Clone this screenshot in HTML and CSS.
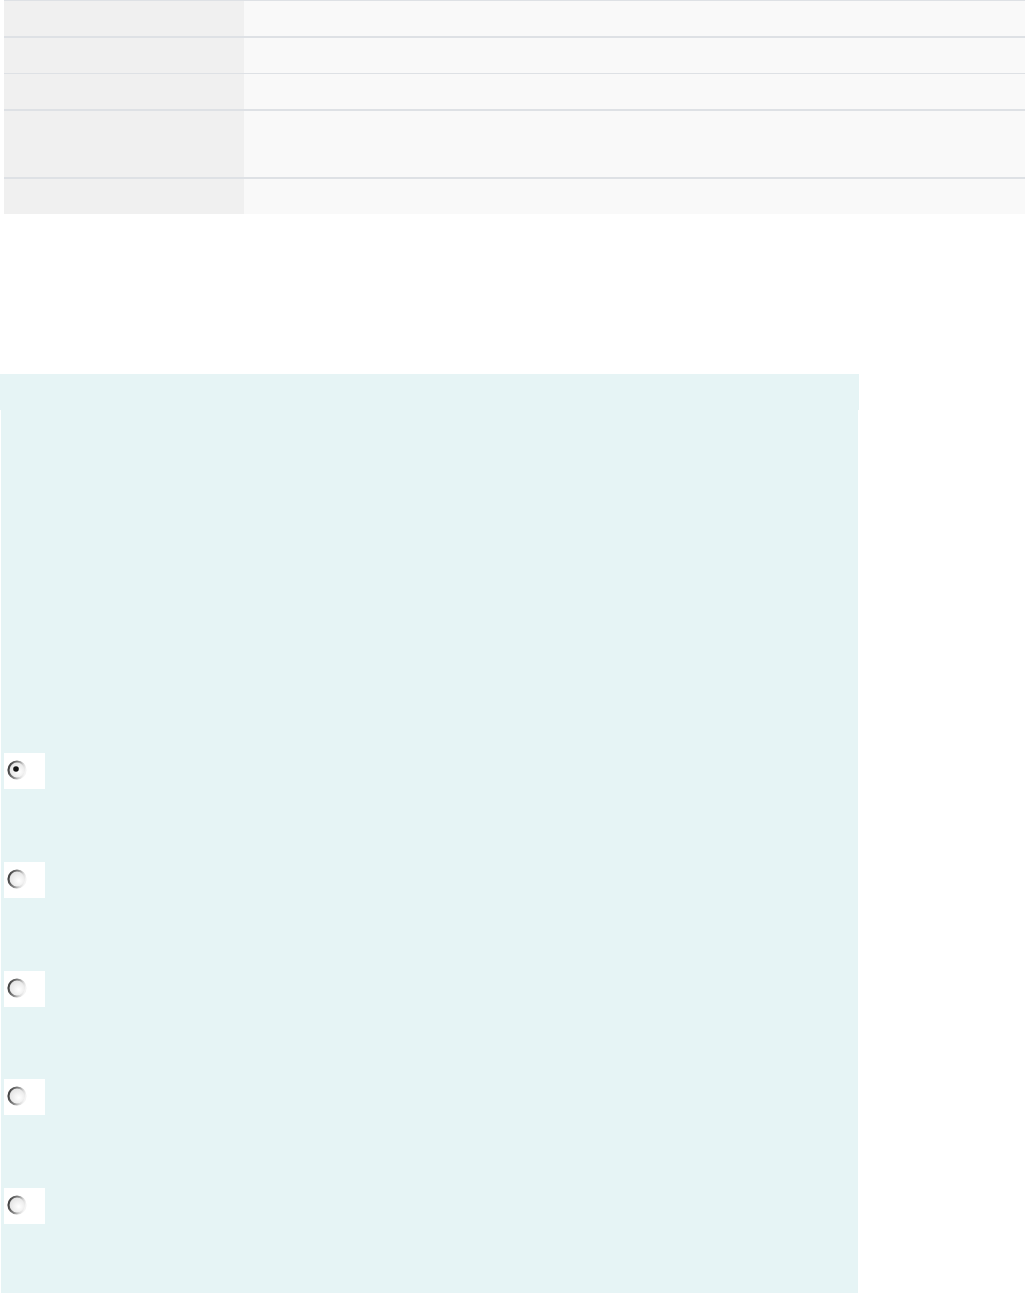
FILE: index.html
```html
<!DOCTYPE html>
<html lang="en">
<head>
<meta charset="utf-8">
<title>Form</title>
<link rel="stylesheet" href="styles.css">
</head>
<body>
<div class="details">
  <div class="row first"><div class="label"></div><div class="value"></div></div>
  <div class="row r2"><div class="label"></div><div class="value"></div></div>
  <div class="row r3"><div class="label"></div><div class="value"></div></div>
  <div class="row tall"><div class="label"></div><div class="value"></div></div>
  <div class="row r5"><div class="label"></div><div class="value"></div></div>
</div>

<section class="card">
  <div class="card-head"></div>
  <div class="card-body">
    <label class="choice"><svg class="radio" width="22" height="22" viewBox="0 0 22 22"><defs><linearGradient id="rg" x1="0" y1="0.2" x2="1" y2="0.5"><stop offset="0" stop-color="#3a3a3a"/><stop offset="0.5" stop-color="#8a8a8a"/><stop offset="0.8" stop-color="#d8d8d8"/><stop offset="1" stop-color="#f4f4f4"/></linearGradient><radialGradient id="fg" cx="0.6" cy="0.6" r="0.6"><stop offset="0" stop-color="#ffffff"/><stop offset="1" stop-color="#e2e2e2"/></radialGradient></defs><circle cx="11" cy="11" r="8.5" fill="url(#fg)" stroke="url(#rg)" stroke-width="2.2"/><circle cx="10" cy="10" r="2.8" fill="#111"/></svg></label>
    <label class="choice"><svg class="radio" width="22" height="22" viewBox="0 0 22 22"><circle cx="11" cy="11" r="8.5" fill="url(#fg)" stroke="url(#rg)" stroke-width="2.2"/></svg></label>
    <label class="choice"><svg class="radio" width="22" height="22" viewBox="0 0 22 22"><circle cx="11" cy="11" r="8.5" fill="url(#fg)" stroke="url(#rg)" stroke-width="2.2"/></svg></label>
    <label class="choice"><svg class="radio" width="22" height="22" viewBox="0 0 22 22"><circle cx="11" cy="11" r="8.5" fill="url(#fg)" stroke="url(#rg)" stroke-width="2.2"/></svg></label>
    <label class="choice"><svg class="radio" width="22" height="22" viewBox="0 0 22 22"><circle cx="11" cy="11" r="8.5" fill="url(#fg)" stroke="url(#rg)" stroke-width="2.2"/></svg></label>
  </div>
</section>
</body>
</html>
```

FILE: styles.css
```css
html, body {
  margin: 0;
  padding: 0;
  background: #ffffff;
  font-family: "Liberation Sans", Arial, sans-serif;
  overflow: hidden;
}

.details {
  margin-left: 4px;
  display: flex;
  flex-direction: column;
}

.row {
  display: flex;
  height: 36px;
  border-top: 1px solid #dee1e5;
  box-sizing: border-box;
}

.row.first { height: 36px; }
.row.r2 { height: 37px; border-top-width: 2px; }
.row.r3 { height: 36px; }
.row.tall { height: 68px; border-top-width: 2px; }
.row.r5 { height: 37px; border-top-width: 2px; }

.label {
  width: 240px;
  flex: none;
  background: #f0f0f0;
}

.value {
  flex: 1;
  background: #f9f9f9;
}

.card {
  margin-top: 160px;
  width: 859px;
  background: #e6f4f5;
}

.card-head {
  height: 36px;
}

.card-body {
  padding: 343px 0 80px 3px;
  display: flex;
  flex-direction: column;
  gap: 72.75px;
  border-left: 1px solid #ffffff;
  border-right: 1px solid #ffffff;
}

.choice {
  width: 41px;
  height: 36px;
  background: #ffffff;
  display: block;
}

.radio {
  display: block;
  margin: 6px 0 0 2px;
}
```
